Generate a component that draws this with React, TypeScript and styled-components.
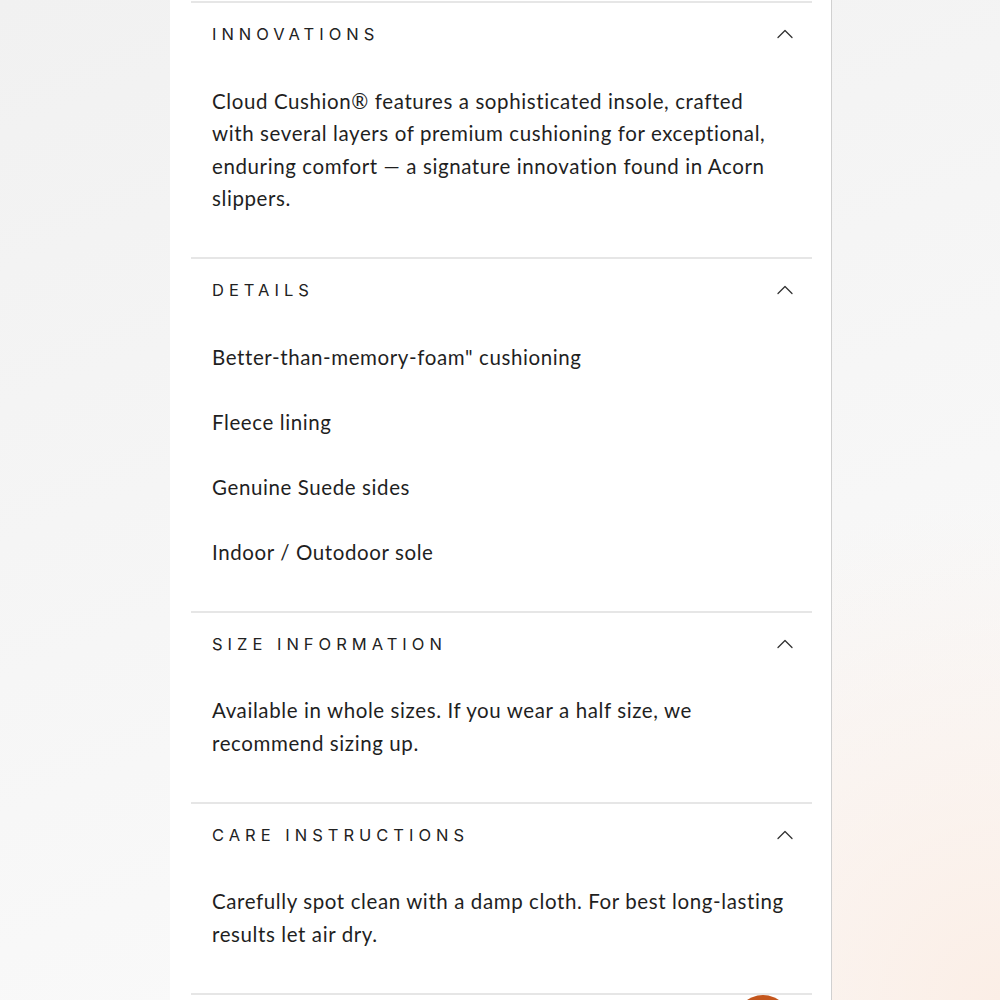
import React from 'react';
import styled, { createGlobalStyle } from 'styled-components';
import { ChevronUp } from 'lucide-react';

const GlobalStyle = createGlobalStyle`
  html, body {
    margin: 0;
    padding: 0;
    height: 100%;
  }
  body {
    background: radial-gradient(ellipse at 100% 100%, #fbeee6 0%, rgba(251, 238, 230, 0) 35%),
      linear-gradient(160deg, #f1f1f1 0%, #f6f6f6 50%, #fbfbfb 100%);
    font-family: Inter, "Open Sans", sans-serif;
    color: #222;
  }
`

const Page = styled.div`
  min-height: 1000px;
  display: flex;
  padding-left: 170px;
  position: relative;
  overflow: hidden;
`

const Panel = styled.div`
  width: 621px;
  padding: 1px 19px 0 21px;
  background: #ffffff;
  border-right: 1px solid #d0d0d0;
  min-height: 999px;
`

const Section = styled.section`
  border-top: 2px solid #e6e6e6;
`

const Header = styled.button`
  display: flex;
  align-items: center;
  justify-content: space-between;
  width: 100%;
  height: 62px;
  padding: 0 13px 0 21px;
  background: none;
  border: none;
  cursor: pointer;
  color: #222;
`

const Title = styled.span`
  font-family: Inter, sans-serif;
  font-size: 16.5px;
  font-weight: 400;
  letter-spacing: 5px;
  text-transform: uppercase;
`

const Body = styled.div`
  padding: 19.5px 25px 42.5px 21px;
  display: flex;
  flex-direction: column;
  gap: 32.5px;
`

const Text = styled.p`
  margin: 0;
  font-family: Lato, Inter, sans-serif;
  font-size: 20.5px;
  letter-spacing: 0.6px;
  line-height: 32.5px;
  color: #1f1f1f;
`

const ChatBubble = styled.div`
  position: absolute;
  left: 735px;
  top: 995px;
  width: 56px;
  height: 56px;
  border-radius: 50%;
  background: #c4561d;
`

const sections = [
  {
    title: 'Innovations',
    items: [
      'Cloud Cushion® features a sophisticated insole, crafted with several layers of premium cushioning for exceptional, enduring comfort — a signature innovation found in Acorn slippers.',
    ],
  },
  {
    title: 'Details',
    items: [
      'Better-than-memory-foam" cushioning',
      'Fleece lining',
      'Genuine Suede sides',
      'Indoor / Outodoor sole',
    ],
  },
  {
    title: 'Size Information',
    items: ['Available in whole sizes. If you wear a half size, we recommend sizing up.'],
  },
  {
    title: 'Care Instructions',
    items: ['Carefully spot clean with a damp cloth. For best long-lasting results let air dry.'],
  },
]

export default function App() {
  return (
    <>
      <GlobalStyle />
      <Page>
        <Panel>
          {sections.map((s) => (
            <Section key={s.title}>
              <Header>
                <Title>{s.title}</Title>
                <ChevronUp size={28} strokeWidth={1.1} color="#333" />
              </Header>
              <Body>
                {s.items.map((t) => (
                  <Text key={t}>{t}</Text>
                ))}
              </Body>
            </Section>
          ))}
          <Section />
        </Panel>
        <ChatBubble />
      </Page>
    </>
  );
}
